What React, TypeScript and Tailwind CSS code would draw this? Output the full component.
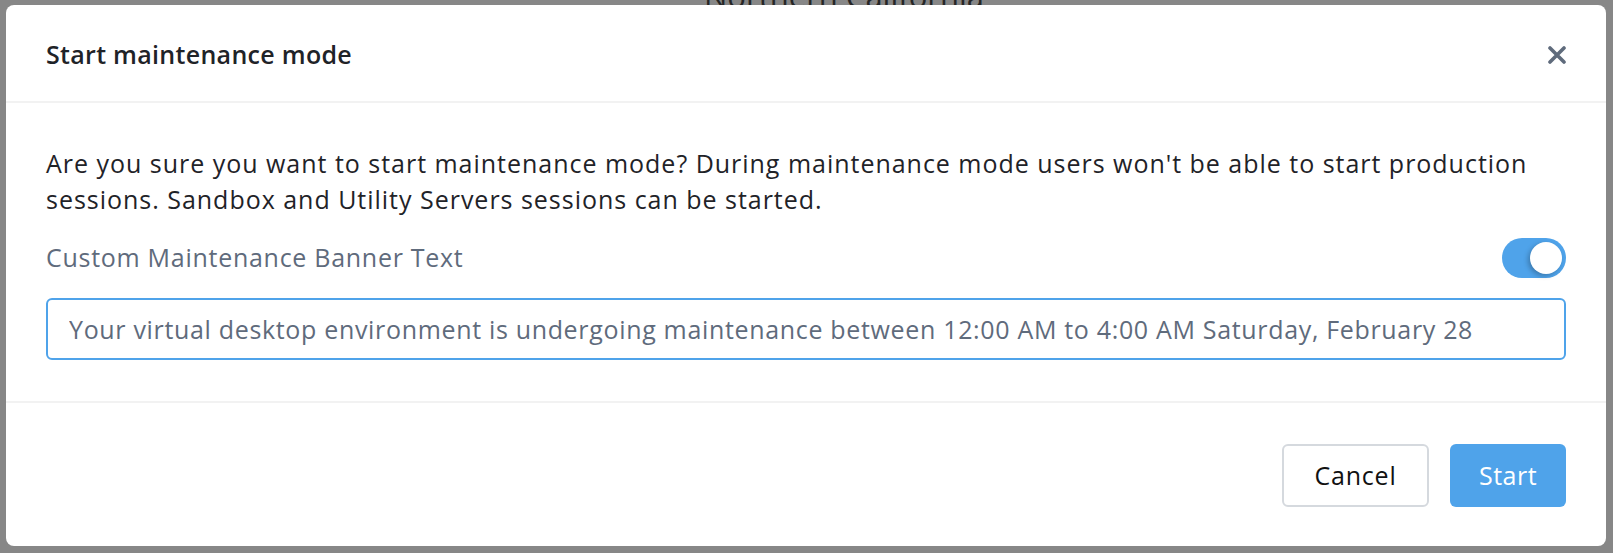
import { useState } from 'react'

/**
 * Maintenance mode confirmation dialog
 */
export default function App() {
  const [bannerOn, setBannerOn] = useState(true)
  const [banner, setBanner] = useState(
    'Your virtual desktop environment is undergoing maintenance between 12:00 AM to 4:00 AM Saturday, February 28'
  )

  return (
    <div
      className="relative h-[553px] w-[1613px] overflow-hidden bg-[#878787] pl-[6px] pt-[5px]"
      style={{ fontFamily: "'Open Sans', 'Noto Sans', sans-serif" }}
    >
      {/* backdrop page content */}
      <div className="absolute left-[704px] top-[-27px] text-[31px] text-[#262626]">Northern California</div>

      <div className="relative flex h-[541px] w-[1600px] flex-col rounded-[8px] bg-white">
        {/* header */}
        <div className="flex h-[98px] items-center justify-between border-b-2 border-[#f2f2f2] px-[40px] pt-[3px]">
          <h2 className="text-[25px] font-semibold tracking-[0.3px] text-[#1f2328]">Start maintenance mode</h2>
          <button className="flex h-[18px] w-[18px] items-center justify-center" aria-label="Close">
            <svg width="18" height="18" viewBox="0 0 18 18">
              <path d="M2 2L16 16M16 2L2 16" stroke="#5f6b7c" strokeWidth={3.6} strokeLinecap="round" />
            </svg>
          </button>
        </div>

        {/* body */}
        <div className="border-b-2 border-[#f2f2f2] px-[40px] pb-[41px] pt-[42px]">
          <p className="text-[25px] leading-[36px] tracking-[0.98px] text-[#1f2328]">
            Are you sure you want to start maintenance mode? During maintenance mode users won't be able to start production
            <br />
            sessions. Sandbox and Utility Servers sessions can be started.
          </p>

          <div className="mt-[21px] flex h-[40px] items-center justify-between">
            <span className="text-[25px] tracking-[0.72px] text-[#5f6b7c]">Custom Maintenance Banner Text</span>
            <button
              onClick={() => setBannerOn(!bannerOn)}
              className={`flex h-[40px] w-[64px] items-center rounded-full p-[4px] ${
                bannerOn ? 'justify-end bg-[#4fa3ea]' : 'justify-start bg-[#d5d9de]'
              }`}
            >
              <span className="h-[32px] w-[32px] rounded-full bg-white shadow-[-2px_2px_5px_rgba(0,0,0,0.25)]" />
            </button>
          </div>

          <input
            value={banner}
            onChange={(e) => setBanner(e.target.value)}
            className="mt-[20px] h-[62px] w-full rounded-[6px] border-2 border-[#4fa3ea] px-[21px] text-[25px] tracking-[0.67px] text-[#5f6b7c] outline-none"
          />
        </div>

        {/* footer */}
        <div className="flex justify-end gap-[21px] px-[40px] pt-[41px]">
          <button className="h-[63px] w-[147px] rounded-[6px] border-2 border-[#d5d9de] bg-white text-[25px] tracking-[0.8px] text-[#111]">
            Cancel
          </button>
          <button className="h-[63px] w-[116px] rounded-[6px] bg-[#4fa3ea] text-[25px] tracking-[0.5px] text-white">
            Start
          </button>
        </div>
      </div>
    </div>
  )
}
